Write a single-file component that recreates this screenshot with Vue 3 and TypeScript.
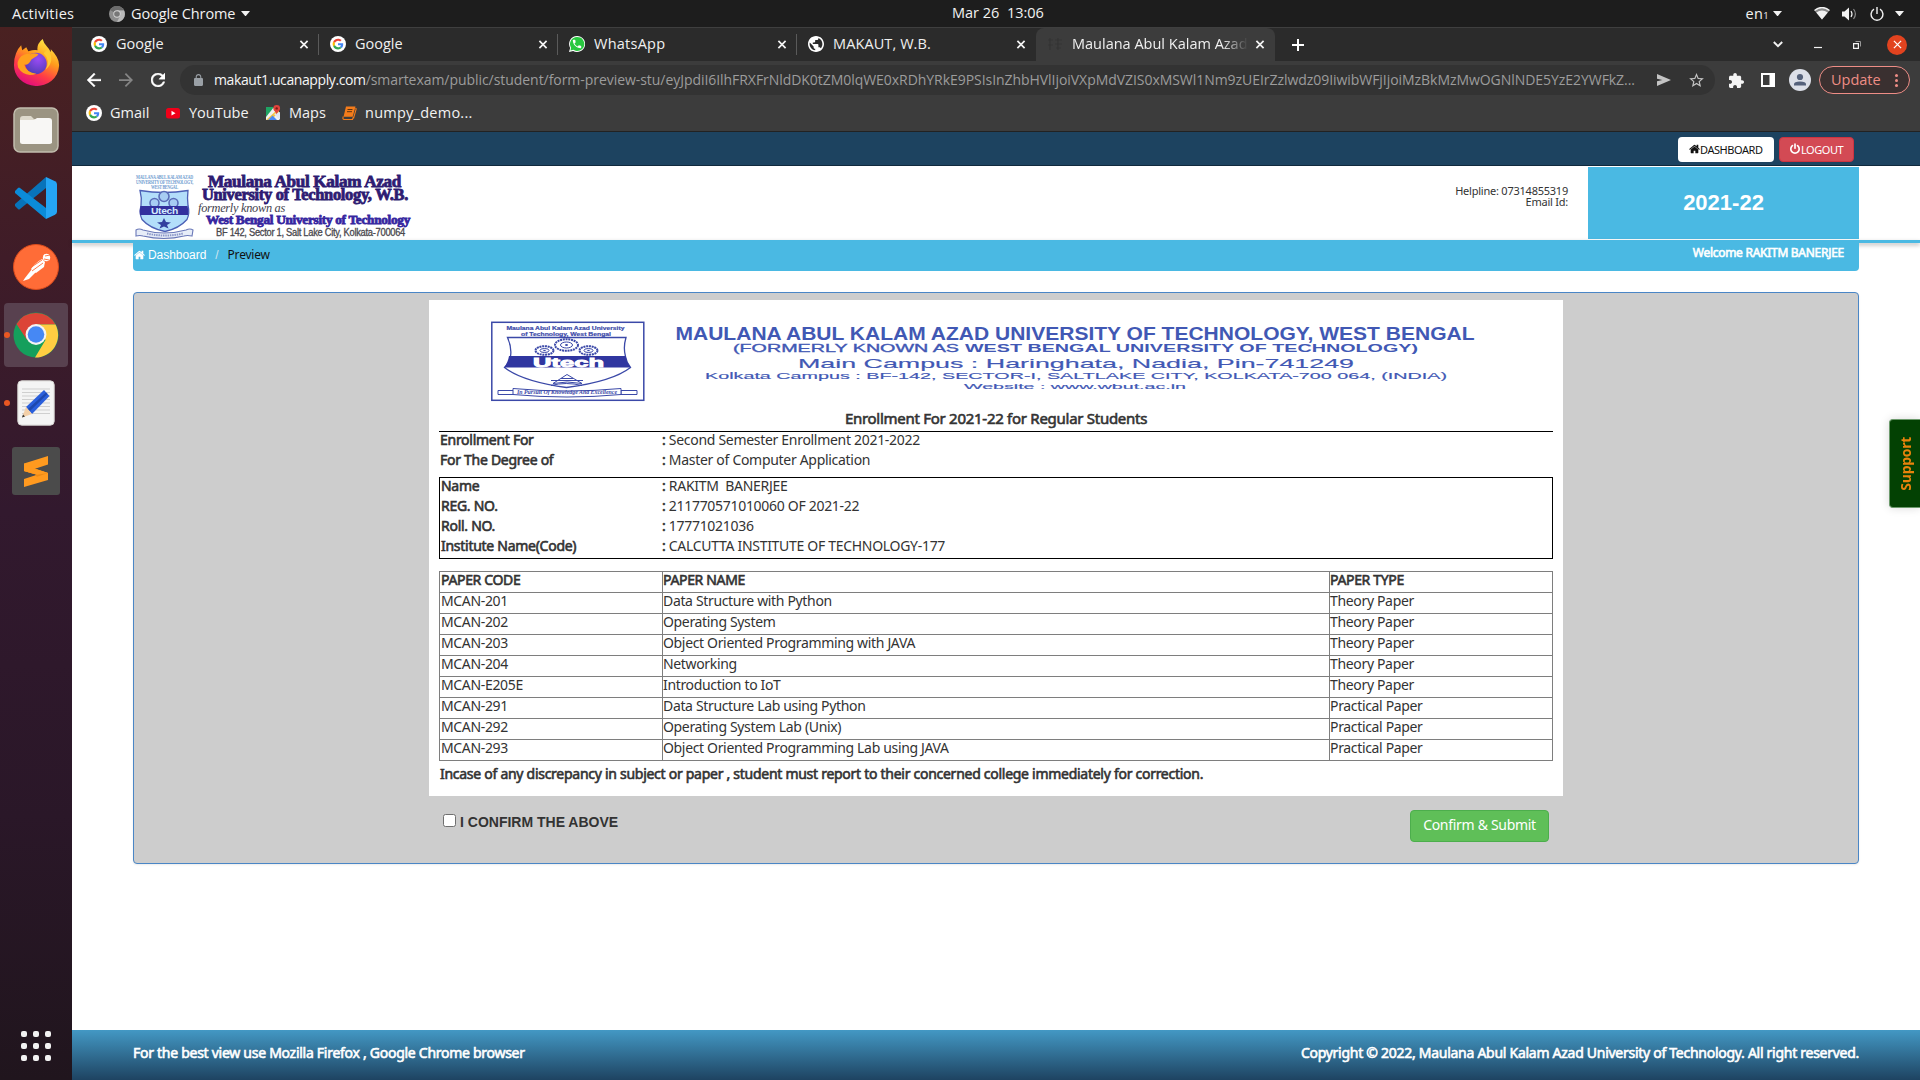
<script setup lang="ts">
interface Tab { title: string; icon: string; active?: boolean }
interface Field { label: string; value: string }
interface Paper { code: string; name: string; type: string }

const tabs: Tab[] = [
  { title: 'Google', icon: 'google' },
  { title: 'Google', icon: 'google' },
  { title: 'WhatsApp', icon: 'whatsapp' },
  { title: 'MAKAUT, W.B.', icon: 'globe' },
  { title: 'Maulana Abul Kalam Azad', icon: 'faint', active: true },
]

const urlHost = 'makaut1.ucanapply.com'
const urlPath =
  '/smartexam/public/student/form-preview-stu/eyJpdiI6IlhFRXFrNldDK0tZM0lqWE0xRDhYRkE9PSIsInZhbHVlIjoiVXpMdVZIS0xMSWl1Nm9zUEIrZzlwdz09IiwibWFjIjoiMzBkMzMwOGNlNDE5YzE2YWFkZ...'

const bookmarks = [
  { label: 'Gmail', icon: 'google', cls: 'b1' },
  { label: 'YouTube', icon: 'youtube', cls: 'b2' },
  { label: 'Maps', icon: 'maps', cls: 'b3' },
  { label: 'numpy_demo...', icon: 'book', cls: 'b4' },
]

const enrollment: Field[] = [
  { label: 'Enrollment For', value: 'Second Semester Enrollment 2021-2022' },
  { label: 'For The Degree of', value: 'Master of Computer Application' },
]

const student: Field[] = [
  { label: 'Name', value: 'RAKITM  BANERJEE' },
  { label: 'REG. NO.', value: '211770571010060 OF 2021-22' },
  { label: 'Roll. NO.', value: '17771021036' },
  { label: 'Institute Name(Code)', value: 'CALCUTTA INSTITUTE OF TECHNOLOGY-177' },
]

const theory = 'Theory Paper'
const practical = 'Practical Paper'
const papers: Paper[] = [
  { code: 'MCAN-201', name: 'Data Structure with Python', type: theory },
  { code: 'MCAN-202', name: 'Operating System', type: theory },
  { code: 'MCAN-203', name: 'Object Oriented Programming with JAVA', type: theory },
  { code: 'MCAN-204', name: 'Networking', type: theory },
  { code: 'MCAN-E205E', name: 'Introduction to IoT', type: theory },
  { code: 'MCAN-291', name: 'Data Structure Lab using Python', type: practical },
  { code: 'MCAN-292', name: 'Operating System Lab (Unix)', type: practical },
  { code: 'MCAN-293', name: 'Object Oriented Programming Lab using JAVA', type: practical },
]
</script>

<template>
  <div class="desktop">
    <svg class="defs" width="0" height="0">
      <symbol id="i-google" viewBox="0 0 64 64">
        <circle cx="32" cy="32" r="32" fill="#fff" />
        <g transform="translate(10.5 10.5) scale(.9)">
          <path fill="#EA4335" d="M24 9.5c3.54 0 6.71 1.22 9.21 3.6l6.85-6.85C35.9 2.38 30.47 0 24 0 14.62 0 6.51 5.38 2.56 13.22l7.98 6.19C12.43 13.72 17.74 9.5 24 9.5z" />
          <path fill="#4285F4" d="M46.98 24.55c0-1.57-.15-3.09-.38-4.55H24v9.02h12.94c-.58 2.96-2.26 5.48-4.78 7.18l7.73 6c4.51-4.18 7.09-10.36 7.09-17.65z" />
          <path fill="#FBBC05" d="M10.53 28.59c-.48-1.45-.76-2.99-.76-4.59s.27-3.14.76-4.59l-7.98-6.19C.92 16.46 0 20.12 0 24c0 3.88.92 7.54 2.56 10.78l7.97-6.19z" />
          <path fill="#34A853" d="M24 48c6.48 0 11.93-2.13 15.89-5.81l-7.73-6c-2.15 1.45-4.92 2.3-8.16 2.3-6.26 0-11.57-4.22-13.47-9.91l-7.98 6.19C6.51 42.62 14.62 48 24 48z" />
        </g>
      </symbol>
      <symbol id="i-whatsapp" viewBox="0 0 24 24">
        <path fill="#fff" d="M12 0a12 12 0 0 0-10.300 18L0 24l6.200-1.600A12 12 0 1 0 12 0z" />
        <path fill="#28c83f" d="M12 1.500a10.500 10.500 0 0 0-8.900 16L2.200 21.800l4.400-1.100A10.500 10.500 0 1 0 12 1.500z" />
        <path fill="#fff" transform="translate(3.600 3.600) scale(.7)" d="M6.620 10.790c1.440 2.830 3.760 5.140 6.590 6.590l2.200-2.200c.27-.27.67-.36 1.020-.24 1.120.37 2.330.57 3.570.57.55 0 1 .45 1 1V20c0 .55-.45 1-1 1-9.390 0-17-7.610-17-17 0-.55.45-1 1-1h3.500c.55 0 1 .45 1 1 0 1.250.2 2.450.57 3.570.11.35.03.74-.25 1.020l-2.200 2.200z" />
      </symbol>
      <symbol id="i-globe" viewBox="2 2 20 20">
        <path fill="#fff" d="M12 2C6.480 2 2 6.480 2 12s4.480 10 10 10 10-4.480 10-10S17.520 2 12 2zm-1 17.930c-3.950-.49-7-3.850-7-7.930 0-.62.08-1.210.21-1.790L9 15v1c0 1.100.9 2 2 2v1.930zm6.900-2.540c-.26-.81-1-1.390-1.900-1.390h-1v-3c0-.55-.45-1-1-1H8v-2h2c.55 0 1-.45 1-1V7h2c1.100 0 2-.9 2-2v-.41c2.930 1.190 5 4.060 5 7.410 0 2.080-.8 3.970-2.100 5.390z" />
      </symbol>
      <symbol id="i-faint" viewBox="0 0 16 16">
        <path d="M1 4h5M3 2v12M1 9h5M8 4h7M11 2v12M8 8h7M9 12h5" stroke="#343434" stroke-width="1.200" fill="none" />
      </symbol>
      <symbol id="i-youtube" viewBox="0 0 16 16">
        <rect x="1" y="3" width="14" height="10.500" rx="2.500" fill="#f00019" />
        <path d="M6.500 5.800v4.800l4-2.400z" fill="#fff" />
      </symbol>
      <symbol id="i-maps" viewBox="0 0 16 16">
        <path d="M1 3l13 0v12H1z" fill="#f1f1f1" />
        <path d="M1 2h8L1 12z" fill="#1fa463" />
        <path d="M1 15L13 4l1 1v2L6 15z" fill="#f6c544" />
        <path d="M3 15l4.500-4.500L12 15z" fill="#4a89f3" />
        <path d="M9 9l6 6V7z" fill="#dfe7f5" />
        <path d="M11.700 0a3.400 3.400 0 0 0-3.400 3.400c0 2.400 2.700 3.100 3.400 6 .6-2.900 3.400-3.600 3.400-6A3.400 3.400 0 0 0 11.700 0z" fill="#e0433b" />
        <circle cx="11.700" cy="3.400" r="1.200" fill="#7c1d18" />
      </symbol>
      <symbol id="i-book" viewBox="0 0 16 16">
        <path d="M5 1.500h9.500l-2.800 10.300H2.500z" fill="#f57c1a" />
        <path d="M2.300 11.500q-1.200 3 1 3h8.200l.9-2.600M14.500 3l.7.800-2.700 9.500" stroke="#f57c1a" stroke-width="1.100" fill="none" />
        <path d="M6.500 4.500h5M6 6.700h5" stroke="#5b3312" stroke-width="1" />
      </symbol>
      <symbol id="i-home" viewBox="0 0 1664 1792">
        <path d="M1408 992v480q0 26-19 45t-45 19h-384v-384h-256v384h-384q-26 0-45-19t-19-45v-480q0-1 .5-3t.5-3l575-474 575 474q1 2 1 6zm223-69l-62 74q-8 9-21 11h-3q-13 0-21-7l-692-577-692 577q-12 8-24 7-13-2-21-11l-62-74q-8-10-7-23.500t11-21.500l719-599q32-26 76-26t76 26l244 204v-195q0-14 9-23t23-9h192q14 0 23 9t9 23v408l219 182q10 8 11 21.500t-7 23.500z" fill="currentColor" />
      </symbol>
      <symbol id="i-x" viewBox="0 0 10 10">
        <path d="M1 1l8 8M9 1l-8 8" stroke="#f4f4f4" stroke-width="1.900" fill="none" />
      </symbol>
      <symbol id="i-caret" viewBox="0 0 10 6">
        <path d="M0 0h10L5 6z" fill="#f2f2f2" />
      </symbol>
    </svg>

    <header class="topbar">
      <span class="activities">Activities</span>
      <svg class="app-ico" viewBox="0 0 16 16">
        <circle cx="8" cy="8" r="8" fill="#8d8d8d" />
        <path d="M8 8L1 4A8 8 0 0 1 15 4.500H8z" fill="#6c6c6c" />
        <path d="M15 4.500A8 8 0 0 1 8 16l3.500-7L8 4.500z" fill="#b9b9b9" />
        <circle cx="8" cy="8" r="3.700" fill="#d5d5d5" />
        <circle cx="8" cy="8" r="2.800" fill="#777" />
      </svg>
      <span class="app-name">Google Chrome</span>
      <svg class="caret"><use href="#i-caret" /></svg>
      <span class="clock">Mar 26&nbsp; 13:06</span>
      <div class="tray">
        <span class="lang">en<small>1</small></span>
        <svg class="caret c1"><use href="#i-caret" /></svg>
        <svg class="wifi" viewBox="0 0 16 13">
          <path d="M.5 3.500Q8-2.500 15.500 3.500L8 12.500z" fill="#8a8a8a" />
          <path d="M.5 3.500Q8-2.500 15.500 3.500" stroke="#f2f2f2" stroke-width="1.400" fill="none" />
          <path d="M2.300 5.500Q8 1.600 13.700 5.500L8 12.500z" fill="#f2f2f2" />
        </svg>
        <svg class="vol" viewBox="0 0 15 14">
          <path d="M0 4.500h2.500L7 .5v13L2.500 9.500H0z" fill="#f2f2f2" />
          <path d="M9 4q2 3 0 6" stroke="#f2f2f2" stroke-width="1.200" fill="none" />
          <path d="M11.500 2q3.800 5 0 10" stroke="#8a8a8a" stroke-width="1.200" fill="none" />
        </svg>
        <svg class="power" viewBox="0 0 14 14">
          <path d="M4 2.200a5.900 5.900 0 1 0 6 0M7 0v7" stroke="#f2f2f2" stroke-width="1.400" fill="none" />
        </svg>
        <svg class="caret c2"><use href="#i-caret" /></svg>
      </div>
    </header>

    <div class="body">
      <nav class="dock">
        <div class="slot">
          <svg width="47" height="47" viewBox="0 0 46 46">
            <defs>
              <linearGradient id="ff" x1=".8" y1="0" x2=".3" y2="1">
                <stop offset="0" stop-color="#fff34a" /><stop offset=".4" stop-color="#ff9b1c" />
                <stop offset=".7" stop-color="#ff3b47" /><stop offset="1" stop-color="#e00a80" />
              </linearGradient>
              <radialGradient id="fp" cx=".6" cy=".3" r=".8">
                <stop offset="0" stop-color="#9a4bf5" /><stop offset="1" stop-color="#4a3bb0" />
              </radialGradient>
            </defs>
            <path d="M3 14q1-4 5-8l1 5 4-3 2 4q6-2 9-1Q23 5 29 0q1 4 4 7 3 3 4 6l0-3q9 9 8 17A22 20 0 0 1 1 25q0-6 2-11z" fill="url(#ff)" />
            <circle cx="22.500" cy="24" r="10.500" fill="url(#fp)" />
            <path d="M8 17q5-4 9-2 3-2 8 0-1 2-4 3l-3 2q-3 6-7 5 2 8 12 9-12 4-18-6-2-6 3-11z" fill="#ffa01e" />
            <path d="M30 14q7 7 2 16 10-9 2-20z" fill="#ffc933" />
          </svg>
        </div>
        <div class="slot">
          <svg width="46" height="46" viewBox="0 0 46 46">
            <rect x="1" y="1" width="44" height="44" rx="6" fill="#9b9482" stroke="#c2bdae" stroke-width="1.500" />
            <path d="M7 12q0-3 3-3h8l3 3h8v8H7z" fill="#dedacd" />
            <rect x="7" y="13" width="32" height="24" rx="2.500" fill="#f8f7f5" />
            <path d="M7 13h14l3-2h12q3 0 3 3v22H10q-3 0-3-3z" fill="#f8f7f5" />
          </svg>
        </div>
        <div class="slot">
          <svg width="42" height="42" viewBox="0 0 42 42">
            <path d="M31 0v11L5 32q-1 1-2 0l-3-3q-1-1 0-2z" fill="#0873ba" />
            <path d="M0 14l3-3q1-1 2 0l26 20v11L0 16q-1-1 0-2z" fill="#0b8bd8" />
            <path d="M31 0l9 4.300q2 1 2 3v27.400q0 2-2 3L31 42z" fill="#25a5f4" />
          </svg>
        </div>
        <div class="slot">
          <svg width="46" height="46" viewBox="0 0 46 46">
            <circle cx="23" cy="23" r="22.500" fill="#ff6c37" stroke="#d94b1c" />
            <circle cx="33.500" cy="13.500" r="3.700" fill="#fff" />
            <path d="M29 15l3 3-1 5-8 6-5-4q4-6 11-10z" fill="#fff" />
            <path d="M19 25l4 3-7 7-6 2 2-3z" fill="#fff" />
            <path d="M17 24l12-8M19 27l11-8M32 12l5-1M31 15l5 1" stroke="#ff6c37" stroke-width=".9" />
          </svg>
        </div>
        <div class="slot tile dot">
          <svg width="46" height="46" viewBox="0 0 46 46">
            <circle cx="23" cy="23" r="22.500" fill="#159f5c" />
            <path d="M3.500 12A22.500 22.500 0 0 1 42.500 12.500H23L14 28z" fill="#dc4437" />
            <path d="M42.500 12.500A22.500 22.500 0 0 1 22 45.500L32.500 28 23 12.500z" fill="#ffcd42" />
            <circle cx="23" cy="22.500" r="10.400" fill="#f4f4f4" />
            <circle cx="23" cy="22.500" r="8.300" fill="#4688f4" />
          </svg>
        </div>
        <div class="slot dot">
          <svg width="38" height="46" viewBox="0 0 38 46">
            <rect x=".8" y=".8" width="36.400" height="44.400" rx="4" fill="#f4f4f4" stroke="#d2d0ce" />
            <path d="M5 9h28M5 12.500h28M5 16h28M5 19.500h28M5 23h28M5 26.500h28M5 30h28M5 33.500h28" stroke="#cfcfcf" stroke-width="1" />
            <path d="M9 27L27 10l5.500 6L15 34z" fill="#2a5fdc" />
            <path d="M11 29L29 12.500l1.500 1.500L13 31z" fill="#1d48ae" />
            <path d="M9 27l6 7-10 3.500z" fill="#f3cfa8" />
            <path d="M6 34.500L5 37.500l3-1z" fill="#333" />
          </svg>
        </div>
        <div class="slot">
          <svg width="48" height="48" viewBox="0 0 48 48">
            <rect width="48" height="48" rx="3" fill="#4b4b4b" />
            <path d="M12 16.500L36 9v8.500l-13 4.300L36 26v7l-24 7v-8l13-4.300L12 24z" fill="#ff9a1f" />
            <path d="M23 28.300l2-.6L12 24l11-2.200L36 26l-11 3.700z" fill="#ee8a14" />
            <path d="M12 16.500V24l13 3.700L36 26l-13-4.200z" fill="#ff9a1f" />
          </svg>
        </div>
        <div class="apps"><i v-for="n in 9" :key="n"></i></div>
      </nav>

      <div class="browser">
        <div class="strip">
          <div v-for="(tab, i) in tabs" :key="i" class="tab" :class="{ active: tab.active }">
            <svg class="fav"><use :href="'#i-' + tab.icon" /></svg>
            <span class="tab-title" :class="'t' + i">{{ tab.title }}</span>
            <svg class="close"><use href="#i-x" /></svg>
          </div>
          <svg class="plus" viewBox="0 0 12 12"><path d="M6 0v12M0 6h12" stroke="#fff" stroke-width="2" /></svg>
          <div class="win">
            <svg width="10" height="7" viewBox="0 0 10 7"><path d="M.8 1L5 5.200 9.200 1" stroke="#f2f2f2" stroke-width="1.900" fill="none" /></svg>
            <svg width="8" height="8" viewBox="0 0 8 8"><path d="M0 6.500h8" stroke="#f2f2f2" stroke-width="1.200" /></svg>
            <svg width="8" height="8" viewBox="0 0 8 8"><path d="M.6 2.600h4.800v4.800H.6z" stroke="#f2f2f2" stroke-width="1.200" fill="none" /><path d="M2.500.5h5v5" stroke="#999" fill="none" /></svg>
            <span class="win-x"><svg width="9" height="9" viewBox="0 0 10 10"><path d="M1 1l8 8M9 1l-8 8" stroke="#fff" stroke-width="1.400" /></svg></span>
          </div>
        </div>

        <div class="toolbar">
          <svg class="nav" viewBox="4 4 16 16"><path d="M20 11H7.830l5.590-5.590L12 4l-8 8 8 8 1.410-1.410L7.830 13H20v-2z" fill="#fff" stroke="#fff" stroke-width=".4" /></svg>
          <svg class="nav" viewBox="4 4 16 16"><path d="M12 4l-1.410 1.410L16.170 11H4v2h12.170l-5.580 5.590L12 20l8-8z" fill="#858585" /></svg>
          <svg class="nav" viewBox="4 4 16 16"><path d="M17.650 6.350C16.200 4.900 14.210 4 12 4c-4.420 0-7.990 3.580-7.990 8s3.570 8 7.990 8c3.730 0 6.840-2.550 7.730-6h-2.080c-.82 2.330-3.040 4-5.650 4-3.310 0-6-2.690-6-6s2.690-6 6-6c1.660 0 3.140.69 4.220 1.780L13 11h7V4l-2.350 2.350z" fill="#fff" stroke="#fff" stroke-width=".5" /></svg>
          <div class="omnibox">
            <svg class="lock" viewBox="4 1 16 21"><path d="M18 8h-1V6c0-2.760-2.240-5-5-5S7 3.240 7 6v2H6c-1.100 0-2 .9-2 2v10c0 1.100.9 2 2 2h12c1.100 0 2-.9 2-2V10c0-1.100-.9-2-2-2zM8.900 6c0-1.710 1.390-3.100 3.100-3.100s3.100 1.390 3.100 3.100v2H8.900z" fill="#9aa0a6" /></svg>
            <span class="url"><b>{{ urlHost }}</b><span>{{ urlPath }}</span></span>
            <svg class="send" viewBox="2 3 21 18"><path d="M2.010 21L23 12 2.010 3 2 10l8 2-8 2z" fill="#c4c4c4" /></svg>
            <svg class="star" viewBox="2 2 20 19"><path d="M22 9.240l-7.190-.62L12 2 9.190 8.630 2 9.240l5.460 4.730L5.820 21 12 17.270 18.180 21l-1.630-7.030L22 9.240zM12 15.400l-3.760 2.270 1-4.280-3.320-2.880 4.380-.38L12 6.100l1.710 4.040 4.380.38-3.320 2.880 1 4.280L12 15.400z" fill="#c4c4c4" /></svg>
          </div>
          <svg class="ext" viewBox="2 1 21 21"><path d="M20.500 11H19V7c0-1.100-.9-2-2-2h-4V3.500C13 2.120 11.880 1 10.500 1S8 2.120 8 3.500V5H4c-1.100 0-1.990.9-1.990 2v3.800H3.500c1.490 0 2.700 1.210 2.700 2.700s-1.210 2.700-2.700 2.700H2V20c0 1.100.9 2 2 2h3.800v-1.500c0-1.490 1.210-2.700 2.700-2.700 1.490 0 2.700 1.210 2.700 2.700V22H17c1.100 0 2-.9 2-2v-4h1.500c1.380 0 2.500-1.120 2.500-2.500S21.880 11 20.500 11z" fill="#f4f4f4" /></svg>
          <svg class="side" viewBox="0 0 14 14"><path d="M0 0h14v14H0zM2 2v10h6.500V2z" fill="#fff" fill-rule="evenodd" /></svg>
          <svg class="avatar" viewBox="0 0 22 22"><circle cx="11" cy="11" r="11" fill="#dcdfe8" /><circle cx="11" cy="8" r="3.100" fill="#55617b" /><path d="M5 16.500v-1.200q0-2.800 6-2.800t6 2.800v1.200z" fill="#55617b" /></svg>
          <div class="update"><span>Update</span><i></i></div>
        </div>

        <div class="bookmarks">
          <div v-for="b in bookmarks" :key="b.label" class="bm" :class="b.cls">
            <svg class="bm-ico"><use :href="'#i-' + b.icon" /></svg>
            <span>{{ b.label }}</span>
          </div>
        </div>

        <main class="page">
          <div class="strap">
            <span class="btn white"><svg class="fa"><use href="#i-home" /></svg><span>DASHBOARD</span></span>
            <span class="btn red">
              <svg class="fa pw" viewBox="128 0 1536 1792"><path d="M1664 896q0 156-61 298t-164 245-245 164-298 61-298-61-245-164-164-245-61-298q0-182 80.500-343t226.500-270q43-32 95.500-25t83.500 50q32 42 24.500 94.500t-49.500 84.500q-98 74-151.500 181t-53.500 228q0 104 40.500 198.500t109.500 163.500 163.500 109.500 198.500 40.500 198.500-40.500 163.500-109.500 109.500-163.500 40.500-198.500q0-121-53.500-228t-151.500-181q-42-32-49.500-84.500t24.500-94.500q31-43 84-50t95 25q146 109 226.500 270t80.500 343zm-640-768v640q0 52-38 90t-90 38-90-38-38-90v-640q0-52 38-90t90-38 90 38 38 90z" fill="currentColor" /></svg>
              <span>LOGOUT</span>
            </span>
          </div>

          <div class="masthead">
            <svg class="logo" width="330" height="68" viewBox="0 0 330 68">
              <g font-family="'Liberation Serif', serif" font-weight="700" fill="#6f9ccf" font-size="5.500">
                <text x="3" y="6.500" textLength="57" lengthAdjust="spacingAndGlyphs">MAULANA ABUL KALAM AZAD</text>
                <text x="3" y="11.500" textLength="57" lengthAdjust="spacingAndGlyphs">UNIVERSITY OF TECHNOLOGY,</text>
                <text x="18" y="16.500" textLength="27" lengthAdjust="spacingAndGlyphs">WEST BENGAL</text>
              </g>
              <path d="M7 18.500q24 4 48 0-1 8 0 15 2 8-1 14-8 9-22 12-15-3-23-12-3-6-1-14 1-8-1-15z" fill="#b3defa" stroke="#4b5fb5" stroke-width="1.300" />
              <g fill="#a8cdf3" stroke="#5a6cb8" stroke-width="1.600"><circle cx="21.500" cy="31" r="4.500" /><circle cx="40.500" cy="31" r="4.500" /><circle cx="31" cy="24.500" r="5" /></g>
              <path d="M7.500 34h47q1.500 5 .5 9H7q-1-4 .5-9z" fill="#33309e" />
              <text x="18" y="42" textLength="27" lengthAdjust="spacingAndGlyphs" font-family="'Liberation Sans', sans-serif" font-weight="700" font-size="9.500" fill="#d5edff">Utech</text>
              <path d="M31 46l2 4 5 .5-4 2.500 1.500 3.500L31 54.500 26.500 56.500 28 53l-4-2.500 5-.5z" fill="#33409e" />
              <path d="M3 58q3-2 7 0 21 6 43 0 4-2 7 0l-1 6q-5-1-8 0-20 5-41 0-3-1-7 0z" fill="#e7edf8" stroke="#6a78b8" stroke-width="1.100" />
              <path d="M14 61.500q18 4 36 0" stroke="#8c98c8" stroke-width="2" stroke-dasharray="1.500 .8" fill="none" />
              <g font-weight="700" font-family="'Liberation Serif', serif" fill="#2e1c72" stroke="#2e1c72" stroke-width=".8">
                <text x="75" y="14.500" font-size="16" textLength="193" lengthAdjust="spacingAndGlyphs">Maulana Abul Kalam Azad</text>
                <text x="69" y="28" font-size="16" textLength="206" lengthAdjust="spacingAndGlyphs">University of Technology, W.B.</text>
                <text x="73" y="52" font-size="13.500" fill="#3626a0" stroke="#3626a0" textLength="204" lengthAdjust="spacingAndGlyphs">West Bengal University of Technology</text>
              </g>
              <text x="65" y="39.500" font-size="13.500" font-style="italic" font-family="'Liberation Serif', serif" fill="#44424e" textLength="87" lengthAdjust="spacingAndGlyphs">formerly known as</text>
              <text x="83" y="64" font-size="10" font-family="'Liberation Sans', sans-serif" fill="#4a484e" stroke="#4a484e" stroke-width=".3" textLength="189" lengthAdjust="spacingAndGlyphs">BF 142, Sector 1, Salt Lake City, Kolkata-700064</text>
            </svg>
            <div class="help"><span>Helpline: 07314855319</span><span>Email Id:</span></div>
            <div class="year">2021-22</div>
          </div>

          <div class="rule">
            <div class="crumbs">
              <svg class="fa hm"><use href="#i-home" /></svg>
              <span class="c-dash">Dashboard</span><span class="c-sep">/</span><span class="c-prev">Preview</span>
              <span class="welcome faux">Welcome RAKITM BANERJEE</span>
            </div>
          </div>

          <section class="panel">
            <div class="sheet">
              <svg class="banner" width="1114" height="101" viewBox="0 0 1114 101">
                <g transform="translate(52 11.500)" fill="none" stroke="#3b49a8">
                  <rect x=".8" y=".8" width="152" height="78" stroke-width="1.500" />
                  <g fill="#3b49a8" stroke="#3b49a8" stroke-width=".2" font-family="'Liberation Sans', sans-serif" font-weight="700" font-size="6.200">
                    <text x="15.500" y="8" textLength="118" lengthAdjust="spacingAndGlyphs">Maulana Abul Kalam Azad University</text>
                    <text x="30" y="14" textLength="90" lengthAdjust="spacingAndGlyphs">of Technology, West Bengal</text>
                  </g>
                  <path d="M16.500 16h118.500q-3 10-.5 19 1 6 5 11-18 14-64 20-44-6-62-20 5-5 6-11 1.500-9-3-19z" stroke-width="1.300" />
                  <g stroke-width="2" stroke-dasharray="2 .7"><ellipse cx="75.500" cy="23.500" rx="11.500" ry="5.800" /><ellipse cx="53.500" cy="29" rx="9" ry="4.300" /><ellipse cx="97.500" cy="29" rx="9" ry="4.300" /></g>
                  <g stroke-width="1"><ellipse cx="75.500" cy="23.500" rx="6" ry="3" /><ellipse cx="53.500" cy="29" rx="4.500" ry="2" /><ellipse cx="97.500" cy="29" rx="4.500" ry="2" /></g>
                  <g fill="#3b49a8" stroke="none"><ellipse cx="75.500" cy="23.500" rx="1.500" ry="1" /><ellipse cx="53.500" cy="29" rx="1.300" ry=".8" /><ellipse cx="97.500" cy="29" rx="1.300" ry=".8" /></g>
                  <path d="M18 34.500h116.500q1 6 5 11.500H13q4-5 5-11.500z" fill="#3036a0" stroke="none" />
                  <text x="42" y="45" textLength="71" lengthAdjust="spacingAndGlyphs" font-family="'Liberation Sans', sans-serif" font-weight="700" font-size="12.500" fill="#fff" stroke="#fff" stroke-width=".8">Utech</text>
                  <path d="M76 53l-14 9q14-3 29 0zM60 59h32M60 64q15-4 31 0M70 57h12" stroke-width="1" />
                  <path d="M7 69h16v4H7zM130 69h16v4h-16z" stroke-width="1" />
                  <path d="M22 67q54 5 108 0v6q-54 5-108 0z" fill="#fff" stroke-width="1" />
                  <text x="26" y="72.800" textLength="100" lengthAdjust="spacingAndGlyphs" font-family="'Liberation Serif', serif" font-style="italic" font-size="5.500" font-weight="700" fill="#3b49a8" stroke="none">In Pursuit Of Knowledge And Excellence</text>
                </g>
                <g font-family="'Liberation Sans', sans-serif" fill="#4158b4">
                  <text x="236.500" y="30" font-size="18.500" font-weight="700" textLength="799" lengthAdjust="spacingAndGlyphs">MAULANA ABUL KALAM AZAD UNIVERSITY OF TECHNOLOGY, WEST BENGAL</text>
                  <text x="294" y="42.300" font-size="10" stroke="#4158b4" stroke-width=".3" textLength="226" lengthAdjust="spacingAndGlyphs">(FORMERLY KNOWN AS</text>
                  <text x="526" y="42.300" font-size="10" font-weight="700" textLength="453" lengthAdjust="spacingAndGlyphs">WEST BENGAL UNIVERSITY OF TECHNOLOGY)</text>
                  <g stroke="#4158b4" stroke-width=".15">
                    <text x="359" y="58" font-size="12.800" textLength="556" lengthAdjust="spacingAndGlyphs">Main Campus : Haringhata, Nadia, Pin-741249</text>
                    <text x="266" y="69" font-size="9" textLength="742" lengthAdjust="spacingAndGlyphs">Kolkata Campus : BF-142, SECTOR-I, SALTLAKE CITY, KOLKATA-700 064, (INDIA)</text>
                    <text x="525" y="79" font-size="8" textLength="222" lengthAdjust="spacingAndGlyphs">Website : www.wbut.ac.in</text>
                  </g>
                </g>
              </svg>
              <h1 class="faux">Enrollment For 2021-22 for Regular Students</h1>
              <dl class="plain">
                <div v-for="f in enrollment" :key="f.label"><dt class="faux">{{ f.label }}</dt><dd><b class="faux">:</b> {{ f.value }}</dd></div>
              </dl>
              <dl class="boxed">
                <div v-for="f in student" :key="f.label"><dt class="faux">{{ f.label }}</dt><dd><b class="faux">:</b> {{ f.value }}</dd></div>
              </dl>
              <table>
                <colgroup><col class="k1" /><col class="k2" /><col class="k3" /></colgroup>
                <tbody>
                  <tr class="faux hd"><td>PAPER CODE</td><td>PAPER NAME</td><td>PAPER TYPE</td></tr>
                  <tr v-for="p in papers" :key="p.code"><td>{{ p.code }}</td><td>{{ p.name }}</td><td>{{ p.type }}</td></tr>
                </tbody>
              </table>
              <p class="note faux">Incase of any discrepancy in subject or paper , student must report to their concerned college immediately for correction.</p>
            </div>
            <div class="actions">
              <label><i class="check"></i><span>I CONFIRM THE ABOVE</span></label>
              <button type="button">Confirm &amp; Submit</button>
            </div>
          </section>

          <footer>
            <span class="f1 faux">For the best view use Mozilla Firefox , Google Chrome browser</span>
            <span class="f2 faux">Copyright © 2022, Maulana Abul Kalam Azad University of Technology. All right reserved.</span>
          </footer>
          <div class="support"><span>Support</span></div>
        </main>
      </div>
    </div>
  </div>
</template>

<style>
html, body { margin: 0; background: #fff; overflow: hidden; }
</style>

<style scoped>
* { box-sizing: border-box; }
.desktop { width: 1920px; height: 1080px; display: flex; flex-direction: column; overflow: hidden; font-family: "Open Sans", "Noto Sans", sans-serif; font-size: 15px; color: #f2f2f2; }
.defs { position: absolute; }
svg { display: block; flex: none; }
span { white-space: nowrap; }

.topbar { height: 27px; flex: none; background: #1d1d1d; display: flex; align-items: center; padding-left: 12px; position: relative; font-size: 14.500px; }
.activities { width: 97px; letter-spacing: .25px; }
.app-ico { width: 16px; height: 16px; margin-right: 6px; }
.app-name { width: 110px; letter-spacing: -.1px; }
.caret { width: 9px; height: 5.500px; }
.clock { position: absolute; left: 952px; top: 3px; line-height: 20px; }
.tray { margin-left: auto; display: flex; align-items: center; padding-right: 16.500px; }
.lang { width: 27px; letter-spacing: .3px; }
.lang small { font-size: 9.500px; }
.wifi { width: 16px; height: 13px; margin-left: 32px; }
.vol { width: 15px; height: 14px; margin-left: 12px; }
.power { width: 14px; height: 14px; margin-left: 13px; }
.c2 { margin-left: 11px; }

.body { flex: 1; display: flex; min-height: 0; }
.dock { width: 72px; flex: none; display: flex; flex-direction: column; align-items: center; padding-top: 3px; background: linear-gradient(#4a2121, #3f1c28 22%, #32192e 46%, #2a1728 75%, #20151d); }
.slot { width: 72px; height: 64px; margin-bottom: 4.200px; flex: none; display: flex; align-items: center; justify-content: center; position: relative; }
.tile { width: 64px; border-radius: 4px; background: #58414f; }
.dot::before { content: ""; position: absolute; left: 4px; top: 29px; width: 6px; height: 6px; border-radius: 50%; background: #ea5722; }
.tile.dot::before { left: 0; }
.apps { margin-top: auto; margin-bottom: 19px; display: grid; grid-template-columns: repeat(3, 6px); gap: 6px; }
.apps i { height: 6px; border-radius: 2px; background: #f2f2f2; }

.browser { flex: 1; min-width: 0; display: flex; flex-direction: column; }
.strip { height: 34px; flex: none; background: #2b2b2b; border-top: 1px solid #3f3f3f; display: flex; align-items: center; padding-left: 8px; }
.tab { width: 239px; height: 33px; display: flex; align-items: center; padding: 0 10px 1px 11px; position: relative; }
.tab:not(.active)::after { content: ""; position: absolute; right: 0; top: 6px; width: 1px; height: 21px; background: #5a5a5a; }
.tab:nth-child(4)::after { display: none; }
.active { background: #3c3c3c; border-radius: 8px 8px 0 0; }
.fav { width: 16px; height: 16px; margin-right: 9px; }
.tab-title { flex: 1; overflow: hidden; font-size: 14.500px; line-height: 20px; color: #f0f0f0; }
.t2 { letter-spacing: .25px; }
.t3 { letter-spacing: .1px; }
.active .tab-title { -webkit-mask-image: linear-gradient(90deg, #000 150px, transparent 176px); mask-image: linear-gradient(90deg, #000 150px, transparent 176px); }
.close { width: 10px; height: 9px; }
.plus { width: 12px; height: 12px; margin-left: 17px; }
.win { margin-left: auto; padding-right: 13px; display: flex; align-items: center; }
.win > svg { margin-right: 31px; }
.win-x { width: 20px; height: 20px; margin-left: -5px; border-radius: 50%; background: #e2431f; display: flex; align-items: center; justify-content: center; }

.toolbar { height: 38px; flex: none; background: #3c3c3c; display: flex; align-items: center; padding-left: 15px; }
.nav { width: 14px; height: 14px; margin-right: 18px; }
.omnibox { width: 1535px; height: 30px; flex: none; margin-left: -3px; border-radius: 15px; background: #333; display: flex; align-items: center; padding: 0 11px 0 14px; }
.lock { width: 9px; height: 12px; margin-right: 11px; }
.url { flex: 1; min-width: 0; padding-bottom: 1px; font-size: 14px; letter-spacing: -.05px; color: #9c9c9c; }
.url b { font-weight: 400; letter-spacing: -.4px; color: #f6f6f6; }
.send { width: 14px; height: 12px; margin-right: 18px; }
.star { width: 15px; height: 14px; }
.ext { width: 15px; height: 15px; margin-left: 14px; }
.side { width: 14px; height: 14px; margin-left: 17px; }
.avatar { width: 22px; height: 22px; margin-left: 14px; }
.update { width: 91px; height: 28px; margin-left: 8px; border: 1px solid #ee8d86; border-radius: 14px; background: #3a3030; color: #ee8d86; font-size: 14.500px; display: flex; align-items: center; padding: 0 0 1px 11px; position: relative; }
.update i { position: absolute; right: 11px; top: 11.500px; width: 3px; height: 3px; border-radius: 50%; background: #ee8d86; box-shadow: 0 -5px #ee8d86, 0 5px #ee8d86; }
.bookmarks { height: 33px; flex: none; background: #3c3c3c; border-bottom: 1px solid #222; display: flex; align-items: center; padding: 0 0 5px 14px; }
.bm { display: flex; align-items: center; font-size: 14.500px; }
.bm-ico { width: 16px; height: 16px; margin-right: 8px; }
.b1 { width: 79px; }
.b2 { width: 100px; }
.b3 { width: 76px; }
.b4 { letter-spacing: .25px; }

.page { flex: 1; min-height: 0; background: #fff; display: flex; flex-direction: column; position: relative; font-family: "Noto Sans", "Open Sans", sans-serif; font-size: 14px; letter-spacing: -.3px; color: #333; }
.faux { font-weight: 400; letter-spacing: -.275px; -webkit-text-stroke: .6px currentColor; }
.strap { height: 34px; flex: none; background: #1d4360; border-bottom: 1px solid #10293d; display: flex; justify-content: flex-end; padding: 5px 66px 0 0; }
.btn { height: 25px; border-radius: 4px; margin-left: 5px; padding-bottom: 1px; font-size: 11px; letter-spacing: -.43px; display: flex; align-items: center; }
.white { width: 96px; padding-left: 11px; background: #fff; color: #111; }
.red { width: 75px; padding-left: 10px; background: #d34a54; border: 1px solid #cc3340; color: #fff; }
.fa { width: 11px; height: 12px; }
.pw { width: 10px; margin-right: 1px; }
.masthead { height: 74px; flex: none; display: flex; padding: 1px 61px 0; }
.logo { margin-top: 5px; }
.help { margin-left: auto; padding: 18px 20px 0 0; font-size: 11px; line-height: 11px; letter-spacing: -.23px; text-align: right; display: flex; flex-direction: column; }
.year { width: 271px; height: 72px; background: #4ab9e3; color: #fff; font: bold 22px/72px "Liberation Sans", Arial, sans-serif; letter-spacing: 0; text-align: center; }
.rule { height: 3px; flex: none; background: #4ab9e3; box-shadow: 0 2px 4px rgba(0, 0, 0, .3); padding: 0 61px; }
.crumbs { height: 31px; position: relative; background: #4ab9e3; border-radius: 0 0 4px 4px; display: flex; align-items: center; padding: 0 15px 1px 1px; font-size: 12px; color: #fff; }
.hm { margin-right: 3px; }
.c-dash, .c-sep { font-family: "Liberation Sans", Arial, sans-serif; letter-spacing: -.05px; }
.c-sep { color: #cfe6f0; margin: 0 9px; }
.c-prev { color: #111; padding-bottom: 2px; letter-spacing: -.2px; }
.welcome { margin-left: auto; padding-bottom: 5px; }

.panel { width: 1726px; height: 572px; flex: none; margin: 49px 0 0 61px; background: #cdcdcd; border: 1px solid #4a86c6; border-radius: 4px; box-shadow: 0 1px 2px rgba(0, 0, 0, .08); padding: 7px 0 0 295px; }
.sheet { width: 1134px; height: 496px; background: #fff; padding: 10px; }
.banner { height: 101px; letter-spacing: 0; }
h1 { margin: 0; height: 21px; font-size: 15px; line-height: 15px; text-align: center; border-bottom: 1px solid #000; }
dl { margin: 0; }
dl > div { display: flex; height: 20px; line-height: 15px; }
dt { width: 223px; padding-left: 1px; }
dd { margin: 0; white-space: pre; }
.boxed { height: 82px; margin-top: 5px; border: 1px solid #000; padding-left: 1px; }
.boxed dt { width: 221px; padding-left: 0; }
table { width: 1114px; margin-top: 12px; table-layout: fixed; border-collapse: collapse; }
.k1 { width: 223px; }
.k2 { width: 667px; }
td { height: 21px; padding: 0 0 5px; border: 1px solid #7e7e7e; line-height: 15px; letter-spacing: -.34px; white-space: nowrap; }
td:first-child { padding-left: 1px; }
.note { margin: 4px 0 0; padding-left: 1px; line-height: 17px; white-space: nowrap; }
.actions { width: 1134px; display: flex; justify-content: space-between; align-items: flex-start; padding: 14px 14px 0; }
label { display: flex; align-items: center; height: 24px; font: bold 14px "Liberation Sans", Arial, sans-serif; letter-spacing: 0; }
.check { width: 13px; height: 13px; margin: -4px 4px 0 0; border: 1px solid #6f6f6f; border-radius: 2.500px; background: #fff; }
button { width: 139px; height: 32px; padding: 0 0 3px; border: 1px solid #4cae4c; border-radius: 4px; background: #5fbf58; color: #fff; font: 14px "Noto Sans", sans-serif; letter-spacing: -.3px; white-space: nowrap; }
footer { height: 50px; flex: none; margin-top: auto; padding: 0 61px 6px; display: flex; align-items: center; justify-content: space-between; background: linear-gradient(#4398c4, #1e4361); color: #fff; }
.support { position: absolute; right: 0; top: 287px; width: 31px; height: 89px; border: 1px solid #6c9a6c; border-right: 0; border-radius: 4px 0 0 4px; background: #034103; box-shadow: 0 0 10px rgba(0, 0, 0, .15); display: flex; align-items: center; justify-content: center; }
.support span { writing-mode: vertical-rl; transform: rotate(180deg); color: #e8830c; font-family: "Open Sans", sans-serif; font-weight: 700; font-size: 14px; letter-spacing: -.3px; }
</style>
